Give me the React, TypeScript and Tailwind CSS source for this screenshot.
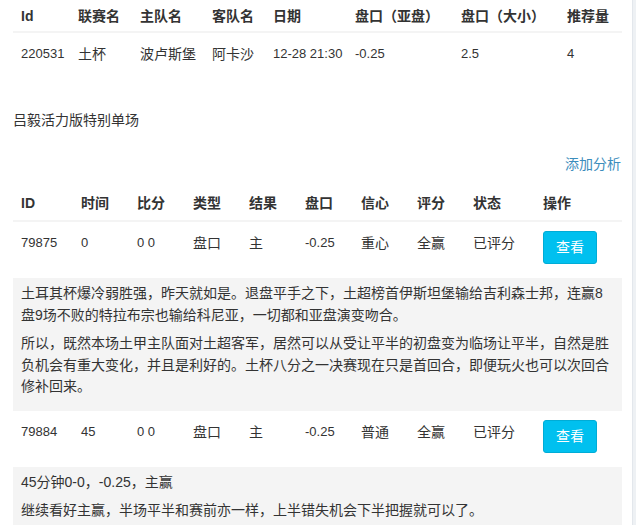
const FONT = "font-['Liberation_Sans','Noto_Sans_CJK_SC',sans-serif]";

const matchCols = [
  { label: "Id", w: "w-[57px]" },
  { label: "联赛名", w: "w-[62px]" },
  { label: "主队名", w: "w-[72px]" },
  { label: "客队名", w: "w-[61px]" },
  { label: "日期", w: "w-[82px]" },
  { label: "盘口（亚盘）", w: "w-[106px]" },
  { label: "盘口（大小）", w: "w-[106px]" },
  { label: "推荐量", w: "" },
];

const matchRow = ["220531", "土杯", "波卢斯堡", "阿卡沙", "12-28 21:30", "-0.25", "2.5", "4"];

const tipCols = [
  { label: "ID", w: "w-[60px]" },
  { label: "时间", w: "w-[56px]" },
  { label: "比分", w: "w-[56px]" },
  { label: "类型", w: "w-[56px]" },
  { label: "结果", w: "w-[56px]" },
  { label: "盘口", w: "w-[56px]" },
  { label: "信心", w: "w-[56px]" },
  { label: "评分", w: "w-[56px]" },
  { label: "状态", w: "w-[70px]" },
  { label: "操作", w: "" },
];

interface Tip {
  id: string;
  minute: string;
  score: string;
  type: string;
  result: string;
  line: string;
  confidence: string;
  grade: string;
  status: string;
  notes: string[];
}

const tips: Tip[] = [
  {
    id: "79875",
    minute: "0",
    score: "0 0",
    type: "盘口",
    result: "主",
    line: "-0.25",
    confidence: "重心",
    grade: "全赢",
    status: "已评分",
    notes: [
      "土耳其杯爆冷弱胜强，昨天就如是。退盘平手之下，土超榜首伊斯坦堡输给吉利森士邦，连赢8盘9场不败的特拉布宗也输给科尼亚，一切都和亚盘演变吻合。",
      "所以，既然本场土甲主队面对土超客军，居然可以从受让平半的初盘变为临场让平半，自然是胜负机会有重大变化，并且是利好的。土杯八分之一决赛现在只是首回合，即便玩火也可以次回合修补回来。",
    ],
  },
  {
    id: "79884",
    minute: "45",
    score: "0 0",
    type: "盘口",
    result: "主",
    line: "-0.25",
    confidence: "普通",
    grade: "全赢",
    status: "已评分",
    notes: ["45分钟0-0，-0.25，主赢", "继续看好主赢，半场平半和赛前亦一样，上半错失机会下半把握就可以了。"],
  },
];

function TipRows({ tip }: { tip: Tip }) {
  const cells = [tip.id, tip.minute, tip.score, tip.type, tip.result, tip.line, tip.confidence, tip.grade, tip.status];
  return (
    <>
      <tr>
        {cells.map((c, i) => (
          <td
            key={i}
            className={`align-top pl-2 pt-[11px] leading-5 ${i < 3 || i === 5 ? "text-[13px]" : "text-[14px]"}`}
          >
            {c}
          </td>
        ))}
        <td className="align-top pl-2 pt-[9px] pb-[14px]">
          <button className="block w-[54px] h-[33px] rounded-[3px] bg-[#00c0ef] border border-[#00acd6] text-white text-[14px]">
            查看
          </button>
        </td>
      </tr>
      <tr>
        <td colSpan={10} className="bg-[#f4f4f4] px-[8px] pt-[5px] pb-[6px]">
          {tip.notes.map((n, i) => (
            <p key={i} className="text-[14px] leading-[21.5px] mb-[7px]">
              {n}
            </p>
          ))}
        </td>
      </tr>
    </>
  );
}

export default function App() {
  return (
    <div className={`${FONT} text-[#333] flex w-[636px] h-[525px] overflow-hidden bg-white`}>
      <div className="w-[609px] ml-[13px] shrink-0">
        <table className="w-full border-collapse table-fixed">
          <thead>
            <tr className="border-b-2 border-[#f4f4f4]">
              {matchCols.map((c) => (
                <th key={c.label} className={`${c.w} text-left font-bold text-[14px] pl-2 h-[32px] leading-5 whitespace-nowrap`}>
                  {c.label}
                </th>
              ))}
            </tr>
          </thead>
          <tbody>
            <tr>
              {matchRow.map((v, i) => (
                <td key={i} className={`pl-2 pt-[11px] pb-[9px] leading-5 whitespace-nowrap ${i === 1 || i === 2 || i === 3 ? "text-[14px]" : "text-[13px]"}`}>
                  {v}
                </td>
              ))}
            </tr>
          </tbody>
        </table>

        <p className="text-[14px] leading-5 mt-[37px]">吕毅活力版特别单场</p>

        <div className="flex justify-end mt-[24px]">
          <span className="text-[14px] leading-5 text-[#3c8dbc] mr-[1px]">添加分析</span>
        </div>

        <table className="w-full border-collapse table-fixed mt-[12px]">
          <thead>
            <tr className="border-b-2 border-[#f4f4f4]">
              {tipCols.map((c) => (
                <th key={c.label} className={`${c.w} text-left font-bold text-[14px] pl-2 h-[35px] leading-5 whitespace-nowrap`}>
                  {c.label}
                </th>
              ))}
            </tr>
          </thead>
          <tbody>
            {tips.map((t) => (
              <TipRows key={t.id} tip={t} />
            ))}
          </tbody>
        </table>
      </div>
      <div className="ml-[10px] flex-1 border-l border-[#e3e7ec] bg-[#eef1f4]" />
    </div>
  );
}
